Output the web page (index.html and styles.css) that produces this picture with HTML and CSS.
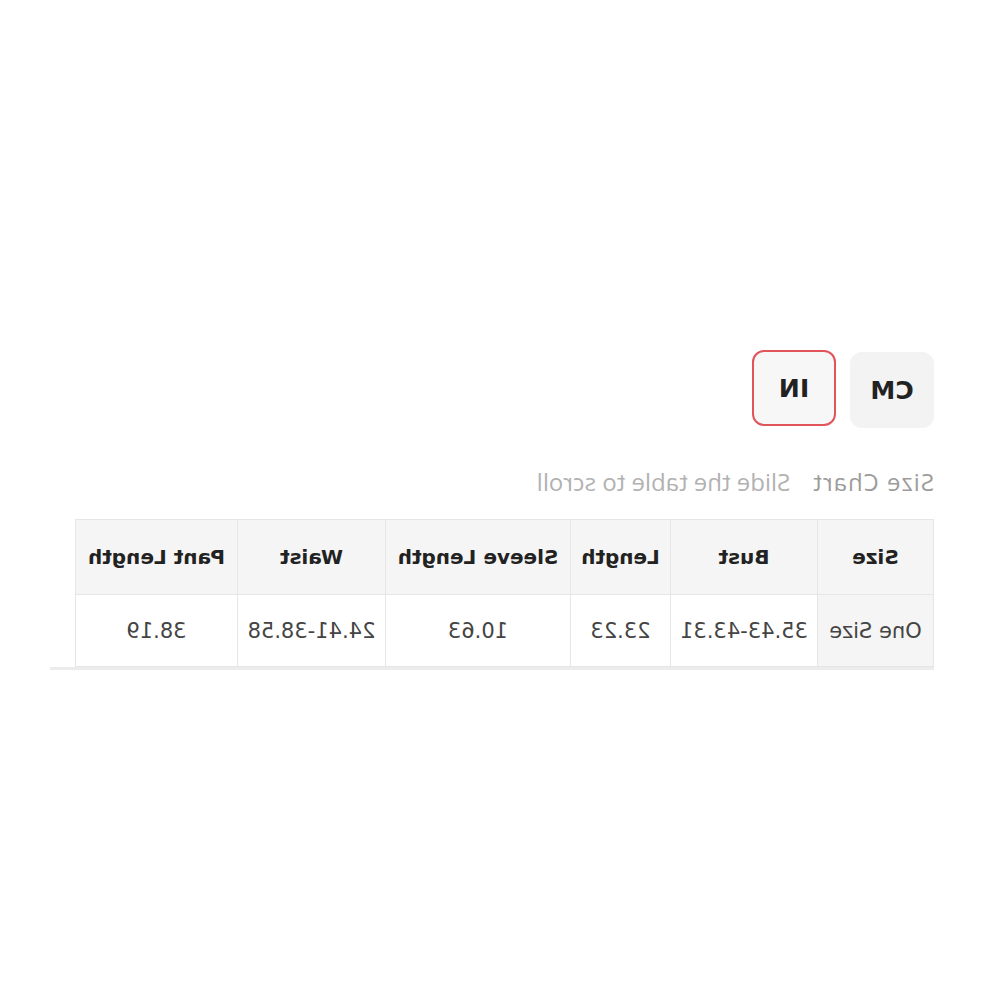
FILE: index.html
```html
<!DOCTYPE html>
<html lang="en">

<head>
    <meta charset="UTF-8">
    <meta name="viewport" content="width=device-width, initial-scale=1.0">
    <title>size chart</title>
    <link rel="stylesheet" href="styles.css">
</head>

<body>

    <!-- the shot is mirrored, so the whole page is flipped -->
    <div class="page">
        <div class="size-box">
            <div class="unit-tabs">
                <div class="unit">CM</div>
                <div class="unit active">IN</div>
            </div>

            <div class="chart-title">
                <span class="title">Size Chart</span>
                <span class="hint">Slide the table to scroll</span>
            </div>

            <div class="table-wrap">
                <table class="size-table">
                    <thead>
                        <tr>
                            <th class="c-size">Size</th>
                            <th class="c-bust">Bust</th>
                            <th class="c-len">Length</th>
                            <th class="c-sleeve">Sleeve Length</th>
                            <th class="c-waist">Waist</th>
                            <th class="c-pant">Pant Length</th>
                        </tr>
                    </thead>
                    <tbody>
                        <tr>
                            <td class="first">One Size</td>
                            <td>35.43-43.31</td>
                            <td>23.23</td>
                            <td>10.63</td>
                            <td>24.41-38.58</td>
                            <td>38.19</td>
                        </tr>
                    </tbody>
                </table>
            </div>
        </div>
    </div>

</body>

</html>
```

FILE: styles.css
```css
* {
    box-sizing: border-box;
    padding: 0;
    margin: 0;
}

body {
    background: #fff;
    font-family: "DejaVu Sans", Verdana, sans-serif;
    color: #333;
}

.page {
    width: 1000px;
    height: 1000px;
    transform: scaleX(-1);
    padding-top: 350px;
    padding-left: 66px;
}

.size-box {
    width: 884px;
}

.unit-tabs {
    display: flex;
    gap: 14px;
    align-items: flex-start;
}

.unit {
    width: 84px;
    height: 76px;
    border-radius: 12px;
    background: #f3f3f3;
    display: flex;
    justify-content: center;
    align-items: center;
    font-weight: bold;
    font-size: 25px;
    color: #222;
    margin-top: 2px;
}

.unit.active {
    width: 84px;
    height: 76px;
    margin-top: 0;
    background: #f7f7f7;
    border: 2px solid #e0545a;
}

.chart-title {
    margin-top: 38px;
    height: 30px;
    display: flex;
    align-items: center;
    font-family: "Open Sans", sans-serif;
    font-size: 24px;
}

.title {
    color: #9c9c9c;
    letter-spacing: 1px;
    margin-right: 22px;
}

.hint {
    color: #b2b2b2;
}

.table-wrap {
    margin-top: 23px;
    border-bottom: 3px solid #ececec;
}

.size-table {
    border-collapse: collapse;
    width: 858px;
    table-layout: fixed;
}

.size-table th,
.size-table td {
    border: 1px solid #e6e6e6;
    text-align: center;
    white-space: nowrap;
}

.size-table th {
    height: 75px;
    background: #f5f5f5;
    color: #222;
    font-weight: bold;
    font-size: 20px;
}

.size-table td {
    height: 72px;
    color: #444;
    font-size: 21px;
}

.size-table td.first {
    background: #f5f5f5;
}

.c-size { width: 116px; }
.c-bust { width: 147px; }
.c-len { width: 100px; }
.c-sleeve { width: 185px; }
.c-waist { width: 148px; }
.c-pant { width: 162px; }
```
